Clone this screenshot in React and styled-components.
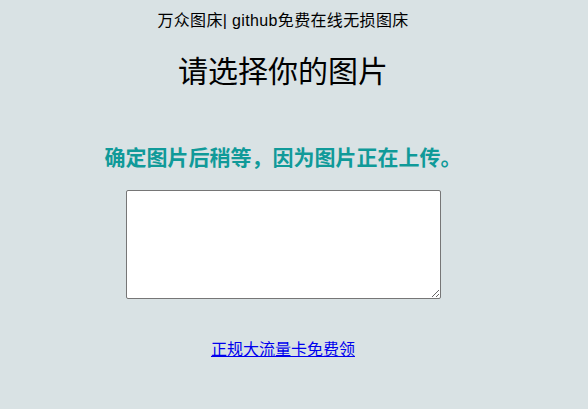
import styled, { createGlobalStyle } from "styled-components";

const GlobalStyle = createGlobalStyle`
  html, body {
    margin: 0;
    padding: 0;
    background-color: #d9e2e4;
  }
  body {
    font-family: "Liberation Sans", "Noto Sans CJK SC", sans-serif;
    color: #000;
  }
`;

const Page = styled.div`
  width: 566px;
  display: flex;
  flex-direction: column;
  align-items: center;
  padding-top: 10px;
`;

const TopLine = styled.div`
  font-size: 16px;
  line-height: 21px;
  letter-spacing: 0.35px;
`;

const Title = styled.h1`
  margin: 21px 0 0;
  font-size: 30px;
  font-weight: 400;
  line-height: 40px;
`;

const Notice = styled.h3`
  margin: 52px 0 0;
  font-size: 21px;
  font-weight: 700;
  line-height: 28px;
  color: #109a99;
`;

const UploadBox = styled.textarea`
  margin-top: 18px;
  width: 315px;
  height: 109px;
  box-sizing: border-box;
  border: 1px solid #767676;
  border-radius: 2px;
  background: #fff;
`;

const Promo = styled.a`
  margin-top: 41px;
  font-size: 16px;
  line-height: 20px;
  color: #0000ee;
`;

const App = () => (
  <>
    <GlobalStyle />
    <Page>
      <TopLine>万众图床| github免费在线无损图床</TopLine>
      <Title>请选择你的图片</Title>
      <Notice>确定图片后稍等，因为图片正在上传。</Notice>
      <UploadBox />
      <Promo href="#">正规大流量卡免费领</Promo>
    </Page>
  </>
);

export default App;
